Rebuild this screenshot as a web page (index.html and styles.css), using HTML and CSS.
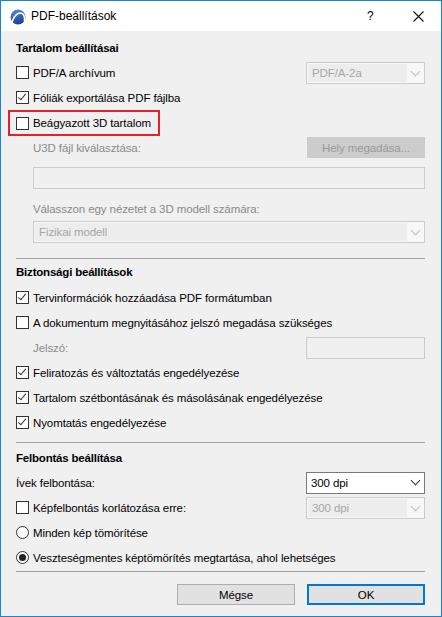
FILE: index.html
```html
<!DOCTYPE html>
<html lang="hu">
<head>
<meta charset="utf-8">
<title>PDF-beállítások</title>
<link rel="stylesheet" href="styles.css">
</head>
<body>
<div class="window">
  <div class="titlebar">
    <svg class="app-icon" width="16" height="16" viewBox="0 0 16 16">
      <defs>
        <linearGradient id="g" x1="0" y1="0" x2="0.3" y2="1">
          <stop offset="0" stop-color="#5b8fe0"/>
          <stop offset="1" stop-color="#1c4592"/>
        </linearGradient>
      </defs>
      <circle cx="8" cy="8" r="7.5" fill="url(#g)"/>
      <path d="M1.8 13.2 C4 6.5 8 3.2 11.6 4.2 C14 5 14.8 8 14.5 12" fill="none" stroke="#fff" stroke-width="1.6" stroke-linecap="round"/>
    </svg>
    <span class="title">PDF-beállítások</span>
    <span class="help">?</span>
    <svg class="close" width="11" height="11" viewBox="0 0 11 11">
      <path d="M0.5 0.5 L10.5 10.5 M10.5 0.5 L0.5 10.5" stroke="#111" stroke-width="1.1" fill="none"/>
    </svg>
  </div>

  <div class="content">
    <div class="heading h1">Tartalom beállításai</div>

    <div class="row">
      <label class="check"><span class="box"></span>PDF/A archívum</label>
      <div class="combo disabled"><span class="combo-text">PDF/A-2a</span><span class="arrow"></span></div>
    </div>
    <div class="row">
      <label class="check"><span class="box checked"></span>Fóliák exportálása PDF fájlba</label>
    </div>
    <div class="highlight">
      <label class="check"><span class="box"></span>Beágyazott 3D tartalom</label>
    </div>
    <div class="row row-u3d">
      <span class="label dim indent">U3D fájl kiválasztása:</span>
      <div class="btn disabled-btn">Hely megadása...</div>
    </div>
    <div class="field wide"></div>
    <div class="label dim indent lbl-view">Válasszon egy nézetet a 3D modell számára:</div>
    <div class="combo disabled wide"><span class="combo-text">Fizikai modell</span><span class="arrow"></span></div>

    <div class="sep sep1"></div>

    <div class="heading h2">Biztonsági beállítások</div>
    <div class="row">
      <label class="check"><span class="box checked"></span>Tervinformációk hozzáadása PDF formátumban</label>
    </div>
    <div class="row">
      <label class="check"><span class="box"></span>A dokumentum megnyitásához jelszó megadása szükséges</label>
    </div>
    <div class="row">
      <span class="label dim indent">Jelszó:</span>
      <div class="field small"></div>
    </div>
    <div class="row">
      <label class="check"><span class="box checked"></span>Feliratozás és változtatás engedélyezése</label>
    </div>
    <div class="row">
      <label class="check"><span class="box checked"></span>Tartalom szétbontásának és másolásának engedélyezése</label>
    </div>
    <div class="row">
      <label class="check"><span class="box checked"></span>Nyomtatás engedélyezése</label>
    </div>

    <div class="sep sep2"></div>

    <div class="heading h3">Felbontás beállítása</div>
    <div class="row">
      <span class="label">Ívek felbontása:</span>
      <div class="combo enabled"><span class="combo-text">300 dpi</span><span class="arrow"></span></div>
    </div>
    <div class="row">
      <label class="check"><span class="box"></span>Képfelbontás korlátozása erre:</label>
      <div class="combo disabled"><span class="combo-text">300 dpi</span><span class="arrow"></span></div>
    </div>
    <div class="row">
      <label class="check"><span class="radio"></span>Minden kép tömörítése</label>
    </div>
    <div class="row">
      <label class="check"><span class="radio on"></span>Veszteségmentes képtömörítés megtartása, ahol lehetséges</label>
    </div>

    <div class="sep sep3"></div>

    <div class="buttons">
      <div class="btn normal">Mégse</div>
      <div class="btn normal default">OK</div>
    </div>
  </div>
</div>
</body>
</html>
```

FILE: styles.css
```css
html, body {
  margin: 0;
  padding: 0;
  background: #f0f0f0;
}

.window {
  width: 442px;
  height: 617px;
  box-sizing: border-box;
  border: 1px solid #1883d7;
  background: #f0f0f0;
  font-family: "Liberation Sans", Arial, sans-serif;
  font-size: 11.5px;
  letter-spacing: -0.1px;
  color: #000;
  display: flex;
  flex-direction: column;
}

.titlebar {
  height: 30px;
  background: #fff;
  display: flex;
  align-items: center;
  flex-shrink: 0;
}

.app-icon {
  margin-left: 9px;
  margin-top: 1px;
}

.title {
  margin-left: 5px;
  font-size: 12px;
  letter-spacing: 0;
  color: #000;
  flex: 1;
}

.help {
  font-size: 12px;
  width: 12px;
  margin-right: 34px;
}

.close {
  margin-right: 17px;
}

.content {
  padding: 0 16px 0 15px;
  display: flex;
  flex-direction: column;
}

.heading {
  font-weight: bold;
  letter-spacing: -0.2px;
  height: 24px;
  display: flex;
  align-items: center;
}

.h1 { margin-top: 5px; }
.h2 { height: 26px; }
.h3 { height: 24px; padding-top: 3px; }

.row {
  height: 25px;
  display: flex;
  align-items: center;
  justify-content: space-between;
}

.row-u3d { height: 23px; }

.check {
  display: flex;
  align-items: center;
  white-space: nowrap;
}

.box {
  width: 13px;
  height: 13px;
  box-sizing: border-box;
  border: 1px solid #333;
  background: #fff;
  margin-right: 4px;
  position: relative;
  flex-shrink: 0;
}

.box.checked::after {
  content: "";
  position: absolute;
  left: 3px;
  top: 0px;
  width: 3px;
  height: 7px;
  border-right: 1px solid #333;
  border-bottom: 1px solid #333;
  transform: rotate(40deg);
}

.radio {
  width: 13px;
  height: 13px;
  box-sizing: border-box;
  border: 1px solid #333;
  border-radius: 50%;
  background: #fff;
  margin-right: 4px;
  display: flex;
  align-items: center;
  justify-content: center;
  flex-shrink: 0;
}

.radio.on::after {
  content: "";
  width: 7px;
  height: 7px;
  border-radius: 50%;
  background: #222;
}

.highlight {
  margin-left: -8px;
  width: 152px;
  height: 26px;
  box-sizing: border-box;
  border: 2px solid #e3232b;
  padding-left: 6px;
  display: flex;
  align-items: center;
}

.label { white-space: nowrap; }
.dim { color: #8a8a8a; }
.indent { margin-left: 17px; }

.lbl-view {
  margin-top: 8px;
  height: 24px;
  display: flex;
  align-items: center;
}

.combo {
  width: 119px;
  height: 22px;
  box-sizing: border-box;
  display: flex;
  align-items: stretch;
}

.combo.wide { width: auto; margin-left: 17px; }

.combo.disabled {
  border: 1px solid #cccccc;
  background: #f7f7f7;
  padding: 1px 0 1px 1px;
  color: #a6a6a6;
}

.combo.disabled .combo-text {
  background: #ededed;
}

.combo.enabled {
  border: 1px solid #7a7a7a;
  background: #fff;
  color: #000;
}

.combo-text {
  flex: 1;
  display: flex;
  align-items: center;
  padding-left: 4px;
  white-space: nowrap;
}

.arrow {
  width: 17px;
  position: relative;
  flex-shrink: 0;
}

.arrow::after {
  content: "";
  position: absolute;
  left: 5px;
  top: 4px;
  width: 6px;
  height: 6px;
  border-right: 1px solid #333;
  border-bottom: 1px solid #333;
  transform: rotate(45deg);
}

.combo.disabled .arrow::after {
  border-color: #bdbdbd;
}

.field {
  height: 22px;
  box-sizing: border-box;
  border: 1px solid #cccccc;
  background: #f0f0f0;
}

.field.wide { margin: 8px 0 0 17px; }
.field.small { width: 119px; }

.btn {
  width: 118px;
  height: 21px;
  box-sizing: border-box;
  display: flex;
  align-items: center;
  justify-content: center;
  white-space: nowrap;
}

.disabled-btn {
  background: #cccccc;
  border: 1px solid #cccccc;
  color: #9a9a9a;
}

.normal {
  background: #e1e1e1;
  border: 1px solid #adadad;
}

.normal.default {
  border: 2px solid #0078d7;
}

.sep {
  height: 1px;
  background: #a0a0a0;
}

.sep1 { margin-top: 15px; }
.sep2 { margin-top: 7px; }
.sep3 { margin-top: 1px; }

.buttons {
  margin-top: 12px;
  display: flex;
  justify-content: flex-end;
  gap: 12px;
}
```
